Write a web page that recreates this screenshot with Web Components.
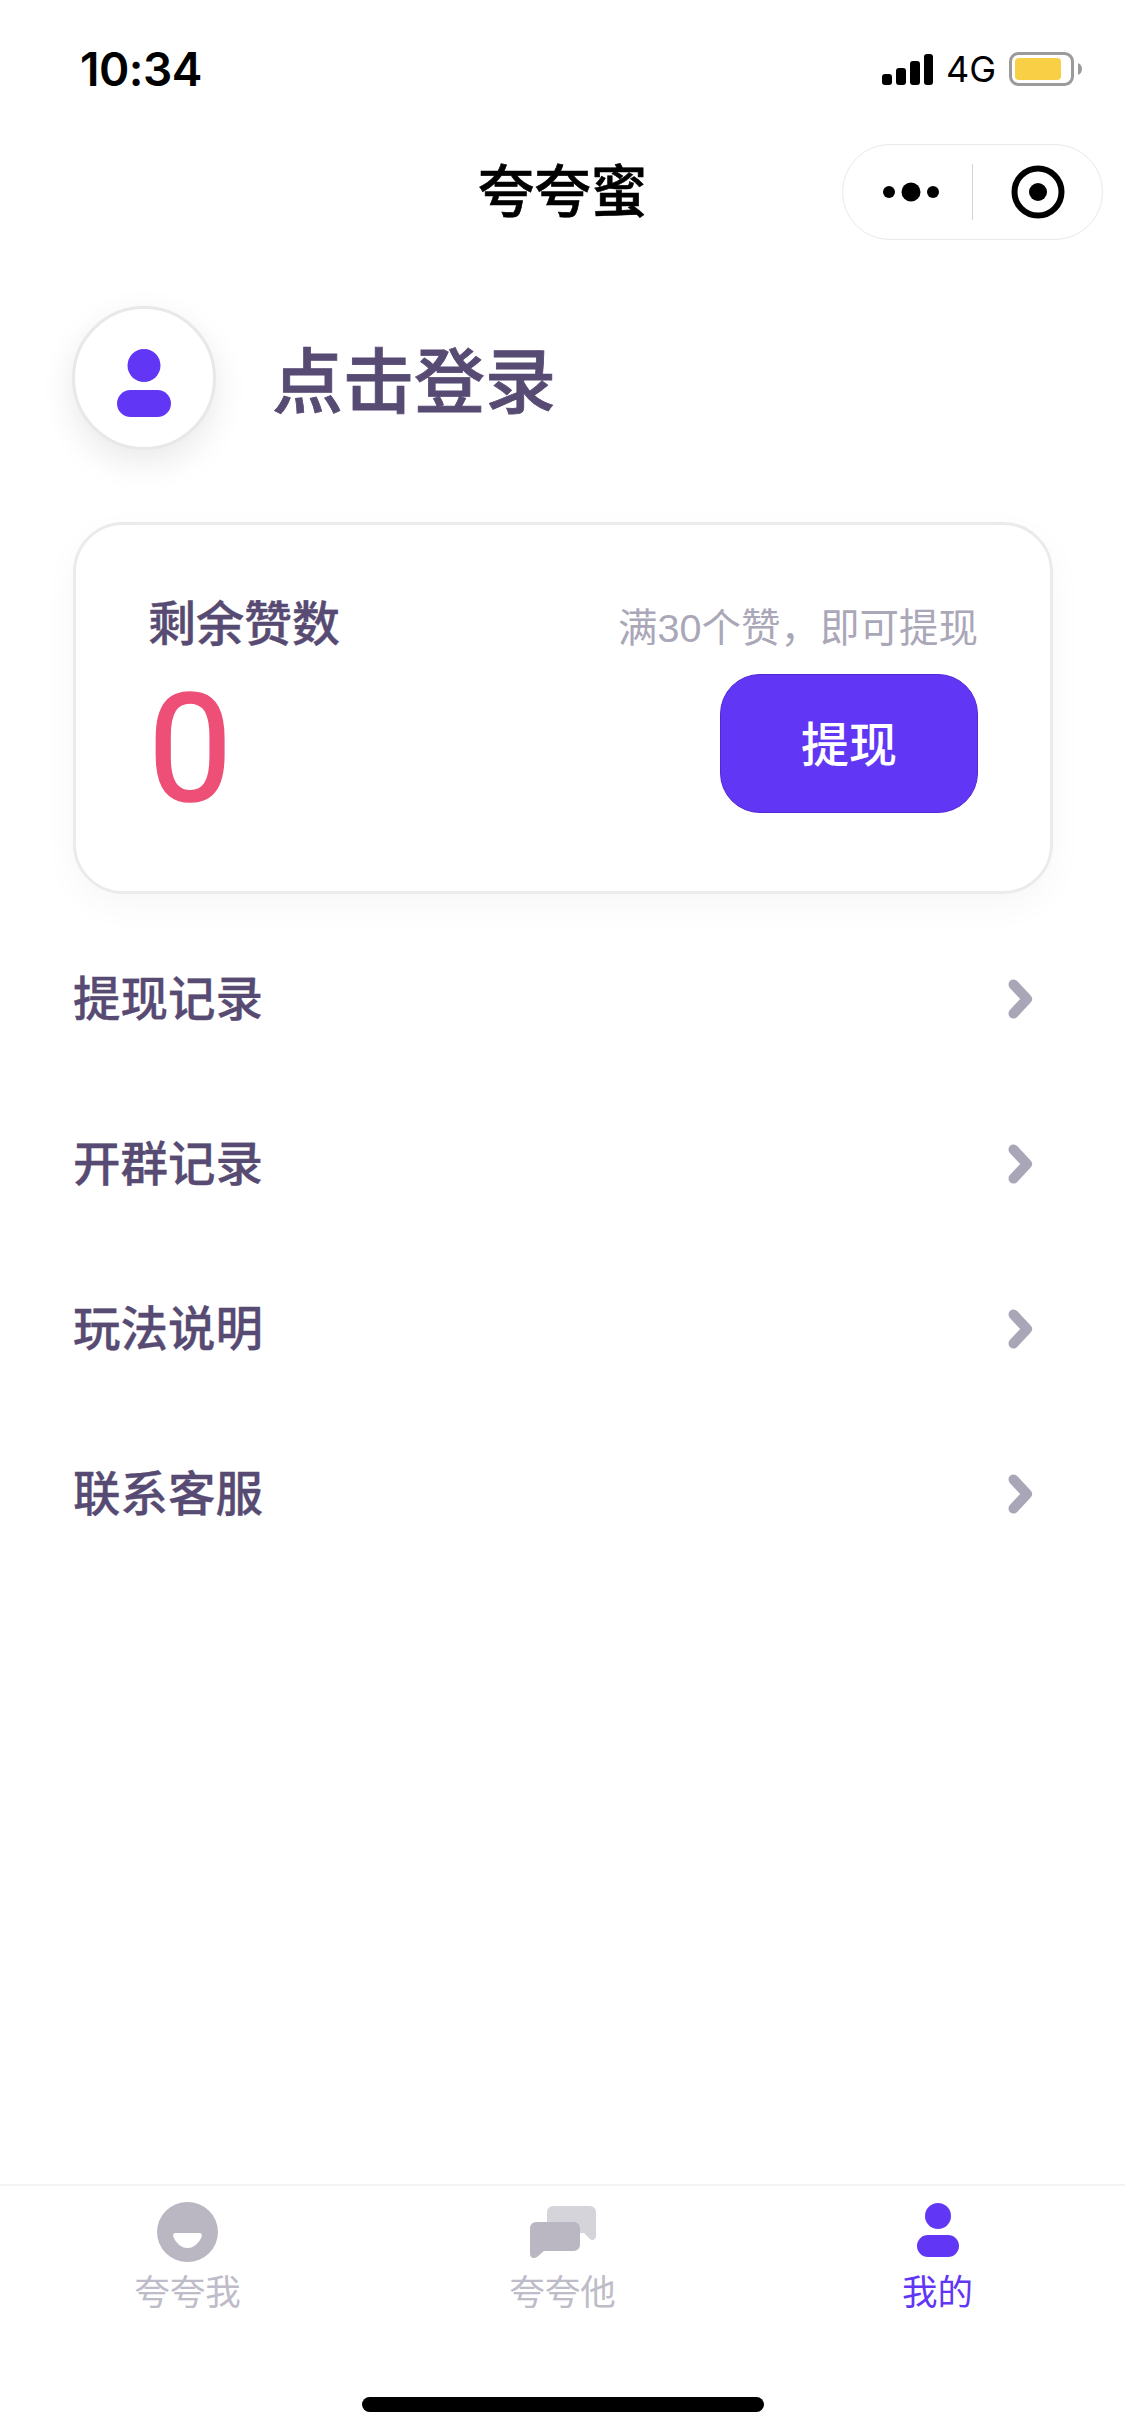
<!DOCTYPE html>
<html lang="zh">
<head>
<meta charset="utf-8">
<title>夸夸蜜</title>
<style>
  html, body { margin: 0; background: #fff; }
  body {
    width: 1125px;
    height: 2436px;
    overflow: hidden;
    font-family: Inter, "Noto Sans CJK SC", sans-serif;
  }
  app-shell { height: 2436px; }
</style>
</head>
<body>
<app-shell>
  <status-bar time="10:34"></status-bar>
  <nav-bar>夸夸蜜</nav-bar>
  <profile-header>点击登录</profile-header>
  <balance-card amount="0" hint="满30个赞，即可提现" action="提现">剩余赞数</balance-card>
  <menu-list>
    <menu-row>提现记录</menu-row>
    <menu-row>开群记录</menu-row>
    <menu-row>玩法说明</menu-row>
    <menu-row>联系客服</menu-row>
  </menu-list>
  <tab-bar>
    <tab-item>
      <svg slot="icon" width="61" height="60" viewBox="0 0 61 60"><path fill-rule="evenodd" fill="#bab7c3" d="M30.5 0a30.5 30 0 1 0 0 60a30.5 30 0 1 0 0-60zM19 31h23c2.500 0 3.500 2 2.500 4C42 41 37 46 30.500 46S19 41 16.500 35c-1-2 0-4 2.500-4z"/></svg>
      夸夸我
    </tab-item>
    <tab-item>
      <svg slot="icon" width="66" height="52" viewBox="0 0 66 52"><path fill="#d5d4db" d="M23 0h37a6 6 0 0 1 6 6v24c0 3.500-3.500 5-6 3l-6-6H17V6a6 6 0 0 1 6-6z"/><path fill="#bab7c3" d="M6 16h38a6 6 0 0 1 6 6v17a6 6 0 0 1-6 6H14l-7 6c-3 2-7 1-7-3V22a6 6 0 0 1 6-6z"/></svg>
      夸夸他
    </tab-item>
    <tab-item active>
      <svg slot="icon" width="42" height="60" viewBox="0 0 42 60"><circle cx="21" cy="14" r="13" fill="#6236f5"/><rect x="0" y="33" width="42" height="22" rx="11" fill="#6236f5"/></svg>
      我的
    </tab-item>
  </tab-bar>
  <home-bar></home-bar>
</app-shell>

<script>
  const define = (name, html, attrs) => {
    customElements.define(name, class extends HTMLElement {
      connectedCallback() {
        if (this.shadowRoot) return;
        this.attachShadow({ mode: "open" }).innerHTML = html;
        if (attrs) attrs(this);
      }
    });
  };

  define("app-shell", `
    <style>
      :host { display: flex; flex-direction: column; background: #fff; }
      ::slotted(tab-bar) { margin-top: auto; }
    </style>
    <slot></slot>
  `);

  define("status-bar", `
    <style>
      :host {
        display: flex;
        align-items: center;
        justify-content: space-between;
        height: 66px;
        padding: 36px 43px 30px 80px;
        color: #000;
      }
      .time { font-size: 46px; font-weight: 600; letter-spacing: -0.5px; line-height: 50px; }
      .right { display: flex; align-items: center; }
      .net { font-size: 36px; margin: 0 13px 0 13px; line-height: 40px; }
      svg { display: block; }
    </style>
    <span class="time"></span>
    <div class="right">
      <svg width="51" height="31" viewBox="0 0 51 31" fill="#000">
        <rect x="0" y="20" width="10" height="11" rx="3"/>
        <rect x="14" y="14" width="10" height="17" rx="3"/>
        <rect x="28" y="7" width="10" height="24" rx="3"/>
        <rect x="42" y="0" width="9" height="31" rx="3"/>
      </svg>
      <span class="net">4G</span>
      <svg width="73" height="34" viewBox="0 0 73 34">
        <rect x="1.500" y="1.500" width="62" height="31" rx="8" fill="#fff" stroke="#9b9b9b" stroke-width="3"/>
        <rect x="6" y="6" width="46" height="22" rx="4" fill="#f9cf45"/>
        <path d="M69 11c2.500 1 4 3 4 6s-1.500 5-4 6z" fill="#9b9b9b"/>
      </svg>
    </div>
  `, (el) => {
    el.shadowRoot.querySelector(".time").textContent = el.getAttribute("time");
  });

  define("nav-bar", `
    <style>
      :host {
        display: grid;
        grid-template-columns: 1fr auto 1fr;
        align-items: center;
        height: 120px;
        color: #000;
      }
      .title { grid-column: 2; font-size: 56.500px; font-weight: 500; line-height: 70px; -webkit-text-stroke: 0.6px #000; }
      .capsule {
        grid-column: 3;
        justify-self: end;
        margin-right: 22px;
        box-sizing: border-box;
        width: 261px;
        height: 96px;
        border: 1.500px solid #e9e9e9;
        border-radius: 48px;
        display: flex;
        align-items: center;
        background: #fff;
      }
      .half { flex: 1; display: flex; align-items: center; justify-content: center; }
      .dots { margin-left: 8px; }
      .line { width: 1.500px; height: 56px; background: #d4d4d4; }
      svg { display: block; }
    </style>
    <div class="title"><slot></slot></div>
    <div class="capsule">
      <div class="half">
        <svg class="dots" width="56" height="20" viewBox="0 0 56 20" fill="#000">
          <circle cx="6" cy="10" r="6"/><circle cx="28" cy="10" r="9.500"/><circle cx="50" cy="10" r="6"/>
        </svg>
      </div>
      <div class="line"></div>
      <div class="half">
        <svg width="54" height="54" viewBox="0 0 54 54">
          <circle cx="27" cy="27" r="23.500" fill="none" stroke="#000" stroke-width="6"/>
          <circle cx="27" cy="27" r="9" fill="#000"/>
        </svg>
      </div>
    </div>
  `);

  define("profile-header", `
    <style>
      :host {
        display: flex;
        align-items: center;
        gap: 56px;
        padding: 54px 0 0 72px;
        color: #574b73;
      }
      .avatar {
        box-sizing: border-box;
        width: 144px;
        height: 144px;
        padding-top: 9px;
        border-radius: 50%;
        border: 3px solid #e8e8e8;
        background: #fff;
        box-shadow: 0 12px 34px rgba(0, 0, 0, 0.09);
        display: flex;
        align-items: center;
        justify-content: center;
      }
      .name { font-size: 71px; font-weight: 500; line-height: 90px; margin-top: 6px; -webkit-text-stroke: 0.8px #574b73; }
      svg { display: block; }
    </style>
    <div class="avatar">
      <svg width="54" height="68" viewBox="0 0 54 68" fill="#6236f5">
        <circle cx="27" cy="16.500" r="16.500"/>
        <rect x="0" y="41" width="54" height="27" rx="13.500"/>
      </svg>
    </div>
    <div class="name"><slot></slot></div>
  `);

  define("balance-card", `
    <style>
      :host {
        display: block;
        box-sizing: border-box;
        width: 980px;
        height: 372px;
        margin: 72px 0 0 73px;
        padding: 65px 72px 0 72px;
        border: 3px solid #ebebeb;
        border-radius: 50px;
        background: #fff;
        box-shadow: 0 12px 36px rgba(0, 0, 0, 0.035);
      }
      .top { display: flex; justify-content: space-between; align-items: flex-end; height: 66px; }
      .label { font-size: 48px; font-weight: 500; line-height: 60px; color: #574b73; margin-bottom: 2px; -webkit-text-stroke: 0.4px #574b73; }
      .hint { font-family: "Liberation Sans", "Noto Sans CJK SC", sans-serif; font-size: 39.500px; line-height: 54px; color: #aaa7b8; margin-bottom: 1px; }
      .bottom { display: flex; justify-content: space-between; align-items: flex-start; margin-top: 18px; }
      .amount { font-family: Roboto, sans-serif; font-weight: 400; font-size: 150px; line-height: 138px; color: #ee4f76; margin-top: 7px; -webkit-text-stroke: 1.5px #ee4f76; }
      .btn {
        box-sizing: border-box;
        width: 258px;
        height: 139px;
        padding-bottom: 5px;
        border: 1.500px solid #5227d8;
        border-radius: 40px;
        background: #6236f5;
        color: #fff;
        font-size: 48px;
        font-weight: 500;
        display: flex;
        align-items: center;
        justify-content: center;
      }
    </style>
    <div class="top">
      <div class="label"><slot></slot></div>
      <div class="hint"></div>
    </div>
    <div class="bottom">
      <div class="amount"></div>
      <div class="btn"></div>
    </div>
  `, (el) => {
    const root = el.shadowRoot;
    root.querySelector(".amount").textContent = el.getAttribute("amount");
    root.querySelector(".hint").textContent = el.getAttribute("hint");
    root.querySelector(".btn").textContent = el.getAttribute("action");
  });

  define("menu-list", `
    <style>:host { display: block; margin-top: 22px; }</style>
    <slot></slot>
  `);

  define("menu-row", `
    <style>
      :host {
        display: flex;
        align-items: center;
        justify-content: space-between;
        height: 165px;
        padding: 0 91px 0 73px;
        font-size: 47.500px;
        font-weight: 500;
        color: #574b73;
      }
      .label { margin-bottom: 7px; -webkit-text-stroke: 0.3px #574b73; }
      svg { display: block; }
    </style>
    <div class="label"><slot></slot></div>
    <svg width="26" height="40" viewBox="0 0 26 40">
      <path d="M5.500 5.500L19 20L5.500 34.500" fill="none" stroke="#a9a6b8" stroke-width="10" stroke-linecap="round" stroke-linejoin="round"/>
    </svg>
  `);

  define("tab-bar", `
    <style>
      :host {
        display: grid;
        grid-template-columns: repeat(3, 1fr);
        height: 166px;
        border-top: 2px solid #f3f3f3;
      }
    </style>
    <slot></slot>
  `);

  define("tab-item", `
    <style>
      :host {
        display: flex;
        flex-direction: column;
        align-items: center;
        padding-top: 15px;
        font-size: 35.500px;
        line-height: 46px;
        color: #bebcc8;
      }
      :host([active]) { color: #6236f5; }
      .icon { height: 62px; margin-bottom: 7px; display: flex; align-items: center; justify-content: center; }
    </style>
    <div class="icon"><slot name="icon"></slot></div>
    <slot></slot>
  `);

  define("home-bar", `
    <style>
      :host { display: flex; justify-content: center; height: 84px; }
      .pill { width: 402px; height: 15px; margin-top: 45px; border-radius: 8px; background: #000; }
    </style>
    <div class="pill"></div>
  `);
</script>
</body>
</html>
